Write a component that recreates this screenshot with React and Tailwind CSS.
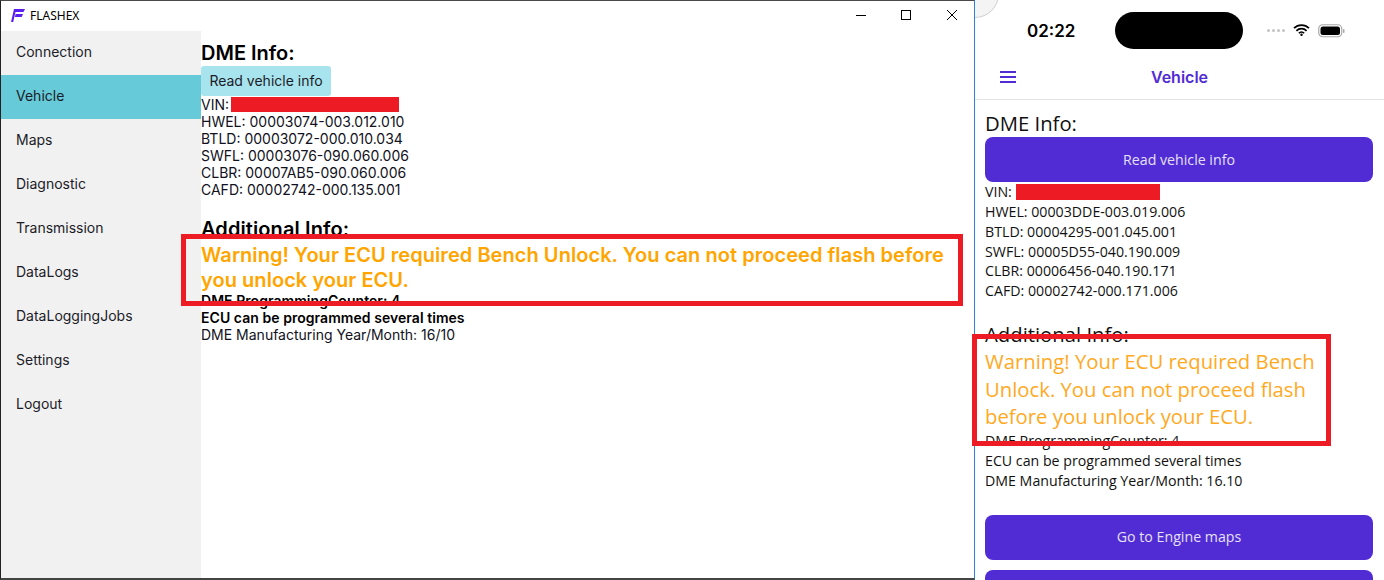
const INTER = 'font-["Inter",sans-serif]'
const OPEN = 'font-["Open_Sans",sans-serif]'

const NAV = ['Connection', 'Vehicle', 'Maps', 'Diagnostic', 'Transmission', 'DataLogs', 'DataLoggingJobs', 'Settings', 'Logout']

function WindowControls() {
  return (
    <div className="flex items-center">
      <svg width="46" height="30" viewBox="0 0 46 30" className="text-black">
        <path d="M20 14.5h10" stroke="currentColor" strokeWidth="1" />
      </svg>
      <svg width="46" height="30" viewBox="0 0 46 30" className="text-black">
        <rect x="19.5" y="9.5" width="9" height="9" fill="none" stroke="currentColor" strokeWidth="1" />
      </svg>
      <svg width="46" height="30" viewBox="0 0 46 30" className="text-black">
        <path d="M19 9l10 10M29 9L19 19" stroke="currentColor" strokeWidth="1" />
      </svg>
    </div>
  )
}

function Logo() {
  return (
    <svg width="14" height="13" viewBox="0 0 14 13">
      <path d="M3 0h11l-1.5 3H4.5L2.2 13H0z" fill="#5a1ff0" />
      <path d="M4.6 5h7.4l-1.4 3H3.9z" fill="#5a1ff0" />
    </svg>
  )
}

function DesktopWindow() {
  return (
    <div className={`relative flex flex-col w-[975px] h-[580px] shrink-0 bg-white border-t border-l border-r border-b-2 border-t-[#4a4a4a] border-l-[#222222] border-r-[#2a86d8] border-b-[#444444] ${INTER}`}>
      <div className="flex items-center justify-between h-[30px] shrink-0">
        <div className="flex items-center pl-[10px] pb-[1px] gap-[5px]">
          <Logo />
          <span className="text-[12px] text-black font-['Noto_Sans',sans-serif]">FLASHEX</span>
        </div>
        <WindowControls />
      </div>
      <div className="flex flex-1 min-h-0">
        <nav className="w-[200px] shrink-0 bg-[#f1f1f1]">
          {NAV.map((n) => (
            <div key={n} className={`flex items-center h-[44px] pl-[15px] pb-[4px] text-[14px] text-[#1c1c28] ${n === 'Vehicle' ? 'bg-[#66cad9]' : ''}`}>
              {n}
            </div>
          ))}
        </nav>
        <main className="flex-1 text-[14px] leading-[17px] text-[#111122]">
          <h2 className="mt-[9px] text-[20px] leading-[26px] font-semibold text-black">DME Info:</h2>
          <button className="block h-[30px] w-[130px] pb-[2px] rounded-[3px] bg-[#a8e4ee] text-[14px] text-[#1c1c28]">Read vehicle info</button>
          <div className="flex items-center h-[17px]">
            VIN:
            <span className="ml-[2px] h-[15px] w-[168px] bg-[#ed1c24]" />
          </div>
          <p>HWEL: 00003074-003.012.010</p>
          <p>BTLD: 00003072-000.010.034</p>
          <p>SWFL: 00003076-090.060.006</p>
          <p>CLBR: 00007AB5-090.060.006</p>
          <p>CAFD: 00002742-000.135.001</p>
          <h2 className="mt-[18px] text-[20px] leading-[27px] font-semibold tracking-[0.1px] text-black">Additional Info:</h2>
          <p className="text-[20px] leading-[25px] font-semibold tracking-[0.05px] text-[#ffa500] pr-[20px]">Warning! Your ECU required Bench Unlock. You can not proceed flash before you unlock your ECU.</p>
          <p className="-mt-[1px] font-semibold tracking-[0.05px] text-black">DME ProgrammingCounter: 4</p>
          <p className="font-semibold tracking-[0.05px] text-black">ECU can be programmed several times</p>
          <p>DME Manufacturing Year/Month: 16/10</p>
        </main>
      </div>
      <div className="absolute left-[180px] top-[233px] w-[782px] h-[72px] border-[5px] border-[#ed1c24]" />
    </div>
  )
}

function StatusBar() {
  return (
    <div className="flex items-center h-[61px] shrink-0">
      <span className="ml-[52px] w-[88px] pt-[3px] text-[17px] font-semibold text-black font-['Inter',sans-serif]">02:22</span>
      <div className="w-[128px] h-[37px] rounded-full bg-black" />
      <div className="ml-[24px] flex gap-[2px]">
        {[0, 1, 2, 3].map((i) => <span key={i} className="w-[3px] h-[3px] rounded-full bg-[#c4c4c4]" />)}
      </div>
      <svg width="17" height="12" viewBox="0 0 17 12" className="ml-[8px] mb-[2px]">
        <path d="M1 4.2a10.5 10.5 0 0 1 15 0M3.4 6.8a7 7 0 0 1 10.2 0M5.9 9.2a3.4 3.4 0 0 1 5.2 0" fill="none" stroke="black" strokeWidth="1.7" />
        <circle cx="8.5" cy="10.8" r="1.2" fill="black" />
      </svg>
      <svg width="27" height="14" viewBox="0 0 27 14" className="ml-[8px]">
        <rect x="0.75" y="0.75" width="23" height="12" rx="4" fill="none" stroke="#a8a8a8" strokeWidth="1.2" />
        <rect x="2.5" y="2.5" width="19.5" height="8.5" rx="2.5" fill="black" />
        <rect x="25" y="5" width="1.5" height="4" rx="0.7" fill="#a8a8a8" />
      </svg>
    </div>
  )
}

function PhoneButton({ children }) {
  return (
    <button className="block w-[388px] h-[45px] shrink-0 rounded-[8px] bg-[#512bd4] text-[14.2px] text-[#e6e0f8]">{children}</button>
  )
}

function Phone() {
  return (
    <div className={`relative flex-1 h-[580px] min-w-0 bg-white flex flex-col ${OPEN}`}>
      <div className="absolute left-0 top-0 w-[30px] h-[20px] overflow-hidden">
        <div className="absolute -left-[24px] -top-[30px] w-[48px] h-[48px] rounded-full bg-[#f4f4f4] border border-[#cfcfcf]" />
      </div>
      <StatusBar />
      <div className="relative flex items-center justify-center h-[39px] pb-[6px] border-b border-[#e4e4e4] shrink-0">
        <svg width="16" height="14" viewBox="0 0 16 14" className="absolute left-[25px] top-[9px]">
          <path d="M0 2h16M0 7h16M0 12h16" stroke="#512bd4" strokeWidth="2" />
        </svg>
        <span className="text-[16px] font-semibold text-[#512bd4] font-['Inter',sans-serif]">Vehicle</span>
      </div>
      <div className="pl-[10px] text-[14.2px] leading-[20px] text-[#111111]">
        <h2 className="mt-[10px] text-[20.3px] leading-[27px]">DME Info:</h2>
        <PhoneButton>Read vehicle info</PhoneButton>
        <div className="flex items-center h-[20px]">
          VIN:
          <span className="ml-[4px] h-[16px] w-[144px] bg-[#ed1c24]" />
        </div>
        <div className="leading-[19.8px]">
          <p>HWEL: 00003DDE-003.019.006</p>
          <p>BTLD: 00004295-001.045.001</p>
          <p>SWFL: 00005D55-040.190.009</p>
          <p>CLBR: 00006456-040.190.171</p>
          <p>CAFD: 00002742-000.171.006</p>
        </div>
        <h2 className="mt-[20px] text-[20.3px] leading-[27px]">Additional Info:</h2>
        <p className="w-[345px] pt-[0.5px] text-[20.3px] leading-[27.5px] text-[#ffa91f]">Warning! Your ECU required Bench Unlock. You can not proceed flash before you unlock your ECU.</p>
        <p>DME ProgrammingCounter: 4</p>
        <p>ECU can be programmed several times</p>
        <p>DME Manufacturing Year/Month: 16.10</p>
        <div className="mt-[24px] flex flex-col gap-[10px]">
          <PhoneButton>Go to Engine maps</PhoneButton>
          <PhoneButton />
        </div>
      </div>
      <div className="absolute left-[-3px] top-[334px] w-[359px] h-[112px] border-[5px] border-[#ed1c24]" />
    </div>
  )
}

export default function App() {
  return (
    <div className="flex w-[1384px] h-[580px] overflow-hidden bg-white">
      <DesktopWindow />
      <Phone />
    </div>
  )
}
